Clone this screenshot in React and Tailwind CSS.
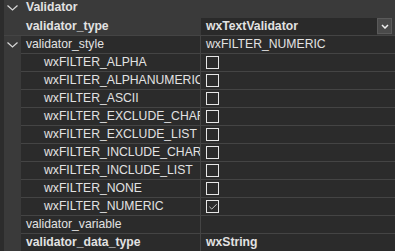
import { Check } from 'lucide-react';

const filters = [
  ['wxFILTER_ALPHA', false],
  ['wxFILTER_ALPHANUMERIC', false],
  ['wxFILTER_ASCII', false],
  ['wxFILTER_EXCLUDE_CHAR_LIST', false],
  ['wxFILTER_EXCLUDE_LIST', false],
  ['wxFILTER_INCLUDE_CHAR_LIST', false],
  ['wxFILTER_INCLUDE_LIST', false],
  ['wxFILTER_NONE', false],
  ['wxFILTER_NUMERIC', true],
];

function Chevron() {
  return (
    <svg width="11" height="6" viewBox="0 0 11 6" className="ml-[3px]">
      <path d="M0.5 0.5 L5.5 5 L10.5 0.5" fill="none" stroke="#d8d8d8" strokeWidth="1.2" />
    </svg>
  );
}

function Box({ checked }) {
  return (
    <div className="w-[13px] h-[13px] border border-[#e6e6e6] flex items-center justify-center">
      {checked && <Check size={10} strokeWidth={2} color="#e6e6e6" />}
    </div>
  );
}

function Row({ label, value, bold, indent, chevron, children }) {
  return (
    <div className="flex h-[18px] bg-[#3a3a3a]">
      <div className="w-[17px] shrink-0 flex items-center">{chevron && <Chevron />}</div>
      <div className="flex flex-1 bg-[#2b2b2b] border-b border-[#444444]">
        <div
          className={`w-[180px] shrink-0 overflow-hidden whitespace-nowrap flex items-center border-r border-[#444444] ${indent ? 'pl-[23px]' : 'pl-[5px]'} ${bold ? 'font-bold' : ''}`}
        >
          {label}
        </div>
        <div className={`flex-1 flex items-center pl-[5px] ${bold ? 'font-bold' : ''}`}>
          {children || value}
        </div>
      </div>
    </div>
  );
}

export default function App() {
  return (
    <div
      className="w-[395px] h-[251px] overflow-hidden bg-[#2c2c2c] pl-[4px] text-[12.2px] text-[#e2e2e2]"
      style={{ fontFamily: '"Liberation Sans", Arial, sans-serif' }}
    >
      <div className="bg-[#3a3a3a]">
        {/* category */}
        <div className="flex h-[18px] items-center font-bold pb-[3px]">
          <div className="w-[17px] shrink-0 flex items-center">
            <Chevron />
          </div>
          <span className="pl-[5px]">Validator</span>
        </div>

        {/* selected row */}
        <div className="flex h-[18px] border-b border-[#444444]">
          <div className="w-[197px] shrink-0 flex items-center pl-[22px] font-bold">validator_type</div>
          <div className="flex-1 flex items-center bg-[#2a2a2a] pl-[5px] font-bold">
            <span className="flex-1">wxTextValidator</span>
          </div>
          <div className="w-[15px] h-[16px] bg-[#4a4a4a] border border-[#5a5a5a] flex items-center justify-center mr-[3px]">
            <svg width="8" height="5" viewBox="0 0 8 5">
              <path d="M1 1 L4 4 L7 1" fill="none" stroke="#f0f0f0" strokeWidth="1.5" />
            </svg>
          </div>
        </div>

        <Row label="validator_style" value="wxFILTER_NUMERIC" chevron />
        {filters.map(([name, on]) => (
          <Row key={name} label={name} indent>
            <Box checked={on} />
          </Row>
        ))}
        <Row label="validator_variable" value="" />
        <Row label="validator_data_type" value="wxString" bold />
      </div>
    </div>
  );
}
